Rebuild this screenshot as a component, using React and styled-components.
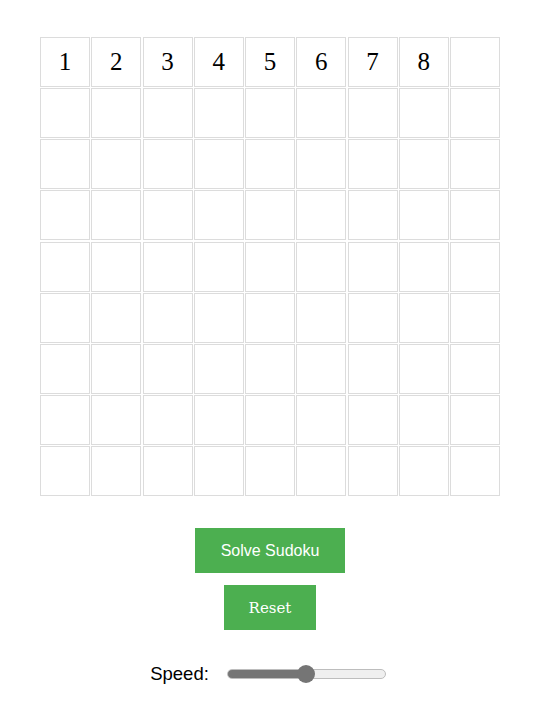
import React, { useState } from "react";
import styled, { createGlobalStyle } from "styled-components";

const GlobalStyle = createGlobalStyle`
  html, body {
    margin: 0;
    padding: 0;
    background: #fff;
  }
  body {
    font-family: "Liberation Sans", Arial, sans-serif;
  }
`;

const Page = styled.div`
  display: flex;
  flex-direction: column;
  align-items: center;
  padding-top: 37px;
`;

const Board = styled.div`
  display: grid;
  grid-template-columns: repeat(9, 1fr);
  grid-auto-rows: 50px;
  gap: 1.125px 1.25px;
  width: 460px;
`;

const Cell = styled.div`
  box-sizing: border-box;
  border: 1px solid #dcdcdc;
  background: #fff;
  display: flex;
  align-items: center;
  justify-content: center;
  font-family: "Liberation Serif", "Times New Roman", serif;
  font-size: 25px;
  color: #000;
`;

const Buttons = styled.div`
  display: flex;
  flex-direction: column;
  align-items: center;
  gap: 12px;
  margin-top: 32px;
`;

const Button = styled.button`
  height: 45px;
  padding: 0 ${(p) => (p.$wide ? 26 : 25)}px;
  border: none;
  background: #4caf50;
  color: #fff;
  font-family: ${(p) =>
    p.$serif ? '"DejaVu Serif", serif' : '"Liberation Sans", Arial, sans-serif'};
  font-size: ${(p) => (p.$serif ? 15 : 16)}px;
  cursor: pointer;
`;

const SpeedRow = styled.div`
  display: flex;
  align-items: center;
  gap: 18px;
  margin-top: 33px;
  margin-left: -4px;
`;

const Label = styled.label`
  font-size: 18.5px;
  color: #000;
`;

const Slider = styled.input`
  -webkit-appearance: none;
  appearance: none;
  width: 159px;
  height: 10px;
  margin: 0;
  border-radius: 5px;
  border: 1px solid #bdbdbd;
  box-sizing: border-box;
  outline: none;

  &::-webkit-slider-thumb {
    -webkit-appearance: none;
    appearance: none;
    width: 18px;
    height: 18px;
    border-radius: 50%;
    background: #757575;
    border: none;
    cursor: pointer;
  }
`;

const digits = ["1", "2", "3", "4", "5", "6", "7", "8", ""];

export default function App() {
  const [speed, setSpeed] = useState(50);
  const cells = [];
  for (let r = 0; r < 9; r++) {
    for (let c = 0; c < 9; c++) {
      cells.push(<Cell key={`${r}-${c}`}>{r === 0 ? digits[c] : ""}</Cell>);
    }
  }

  const fill = `linear-gradient(to right, #757575 0%, #757575 ${speed}%, #efefef ${speed}%, #efefef 100%)`;

  return (
    <>
      <GlobalStyle />
      <Page>
        <Board>{cells}</Board>
        <Buttons>
          <Button $wide>Solve Sudoku</Button>
          <Button $serif>Reset</Button>
        </Buttons>
        <SpeedRow>
          <Label htmlFor="speed">Speed:</Label>
          <Slider
            id="speed"
            type="range"
            min="0"
            max="100"
            value={speed}
            onChange={(e) => setSpeed(Number(e.target.value))}
            style={{ background: fill }}
          />
        </SpeedRow>
      </Page>
    </>
  );
}
